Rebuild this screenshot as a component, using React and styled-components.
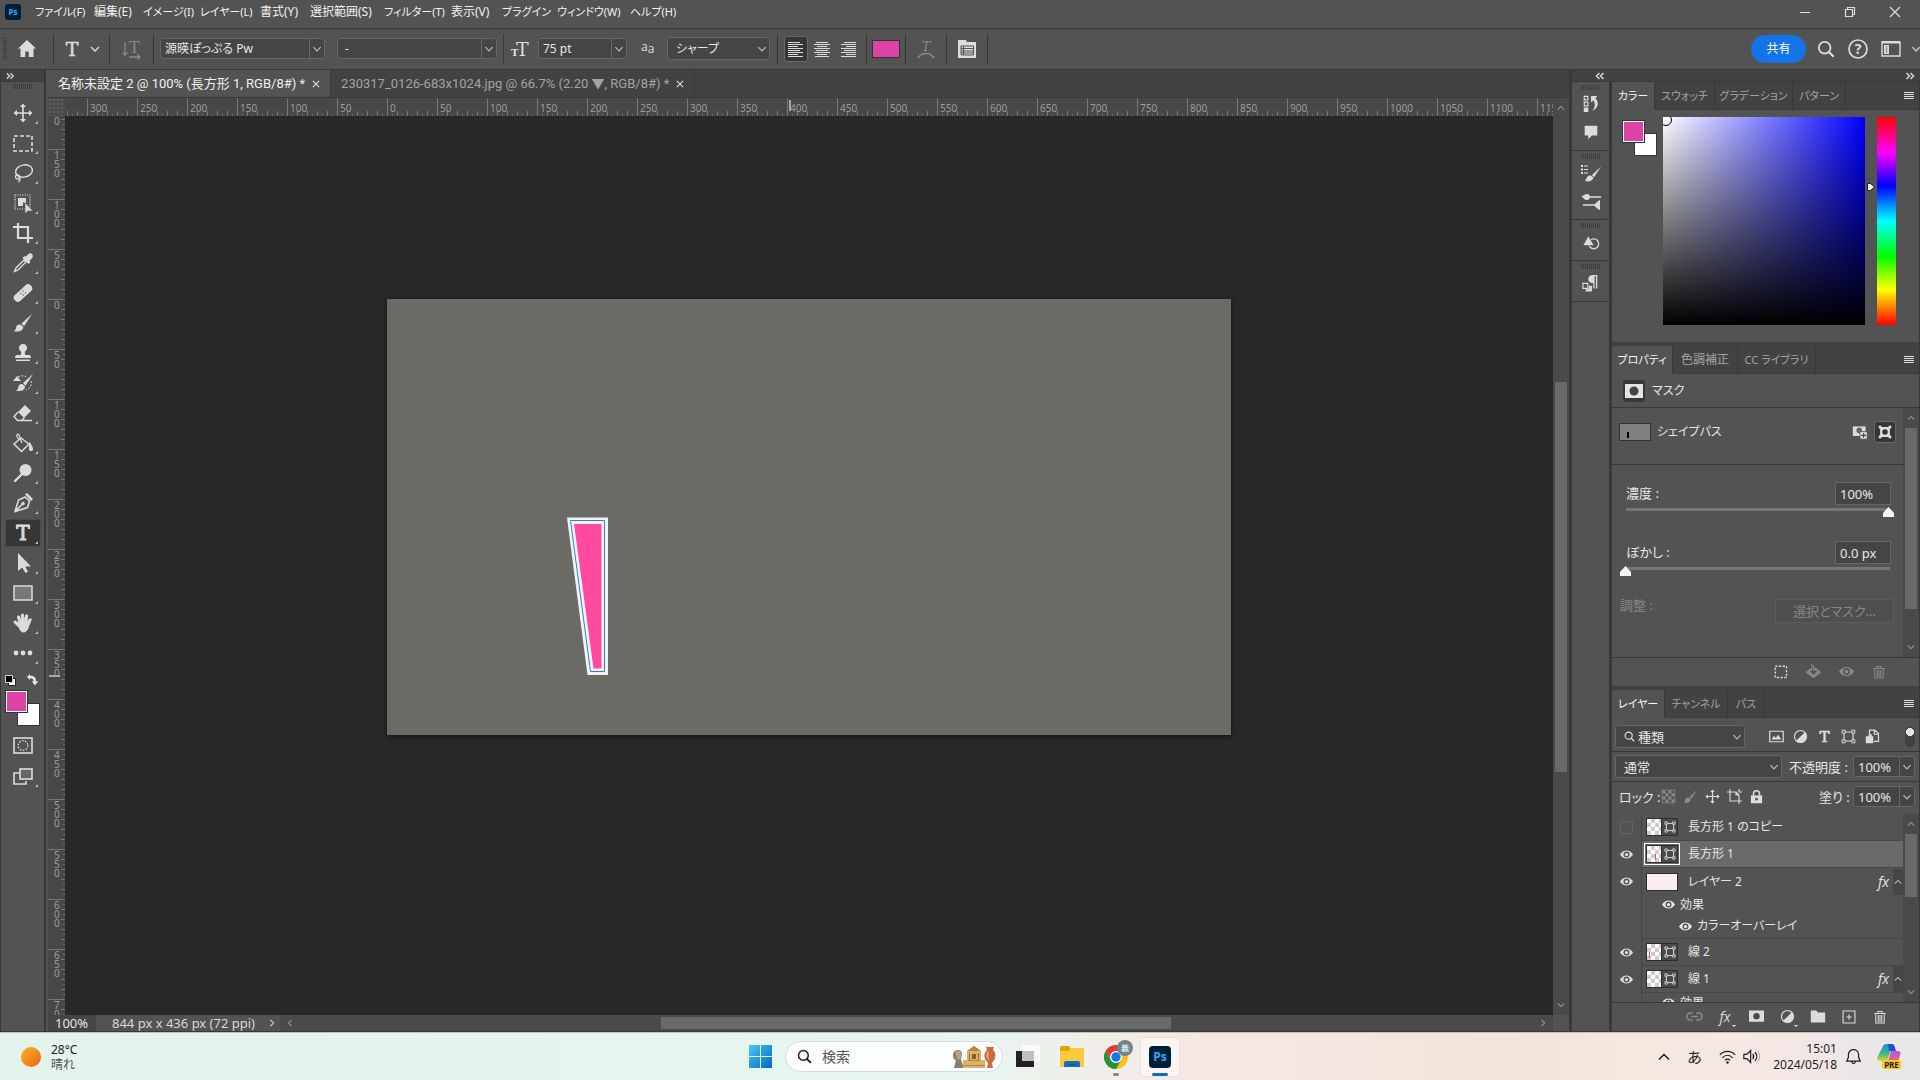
import React, { useState } from "react";
import styled, { createGlobalStyle, css } from "styled-components";

const c = {
  panel: "#535353",
  dark: "#424242",
  track: "#4a4a4a",
  field: "#454545",
  line: "#383838",
  fieldLine: "#666666",
  thumb: "#696969",
  text: "#e6e6e6",
  dim: "#a3a3a3",
  icon: "#dcdcdc",
  pink: "#dc43a5",
};

const GlobalStyle = createGlobalStyle`
  * { box-sizing: border-box; }
  body {
    margin: 0;
    background: ${c.panel};
    color: ${c.text};
    font-family: "Noto Sans", "Noto Sans CJK JP", sans-serif;
    font-size: 12px;
    line-height: 16px;
    font-feature-settings: "palt";
    overflow: hidden;
  }
  button, input, select {
    font: inherit;
    font-feature-settings: inherit;
    color: inherit;
    background: none;
    border: 0;
    padding: 0;
    margin: 0;
    outline: none;
    min-width: 0;
  }
  ul, h1 { margin: 0; padding: 0; list-style: none; font-weight: normal; }
`;

/* ---------- icons ---------- */

const Svg = styled.svg`
  display: block;
  flex: none;
  overflow: visible;
  width: ${(p) => p.$w || 20}px;
  height: ${(p) => p.$h || p.$w || 20}px;
  fill: currentColor;
`;

const line = { fill: "none", stroke: "currentColor" };

const icons = {
  home: <path d="M10 1 1 9.5h2.5V18h4.800v-5.500h3.400V18h4.800V9.500H19z" />,
  chevron: <path {...line} strokeWidth="1.300" d="m6 8 4 4 4-4" />,
  up: <path {...line} strokeWidth="1.300" d="m6 12 4-4 4 4" />,
  left: <path {...line} strokeWidth="1.300" d="m12 6-4 4 4 4" />,
  right: <path {...line} strokeWidth="1.300" d="m8 6 4 4-4 4" />,
  close: <path {...line} strokeWidth="1.200" d="m6.500 6.500 7 7m0-7-7 7" />,
  collapse: <path {...line} strokeWidth="1.600" d="m9.500 7-3 3 3 3m4-6-3 3 3 3" />,
  expand: <path {...line} strokeWidth="1.600" d="m6.500 7 3 3-3 3m4-6 3 3-3 3" />,
  menu: <path {...line} d="M5 6.500h10m-10 2h10m-10 2h10m-10 2h10" />,
  move: (
    <>
      <path {...line} strokeWidth="1.600" d="M10 3v14M3 10h14" />
      <path d="m10 .5 3 3.500H7zM10 19.500l3-3.500H7zM.5 10 4 7v6zM19.500 10 16 7v6z" />
    </>
  ),
  marquee: <rect {...line} strokeWidth="1.600" strokeDasharray="4 2" x="1" y="3" width="18" height="15" />,
  lasso: (
    <>
      <ellipse {...line} strokeWidth="1.500" cx="11" cy="8" rx="8.500" ry="6" transform="rotate(-12 11 8)" />
      <circle {...line} strokeWidth="1.300" cx="4.500" cy="14" r="2" />
      <path {...line} strokeWidth="1.300" d="M3 12c3 1 6 3 2.500 7" />
    </>
  ),
  object: (
    <>
      <rect {...line} strokeWidth="1.200" strokeDasharray="1.200 1.200" x="2" y="2" width="15" height="14" />
      <path d="M5 5h8v6l-3-2v4H5z" />
      <path stroke={c.panel} strokeWidth=".6" d="M12 9.500v11l3-2.500h5z" />
    </>
  ),
  crop: <path {...line} strokeWidth="2.200" d="M0 4h15v12M5 0v15h15M15 14v6" />,
  dropper: (
    <>
      <path {...line} strokeWidth="1.400" d="m11 7 2 2-8 8-3.500 1.500L3 15z" />
      <path d="M19 1c-1.500-1.300-3-.8-4 .5l-2.300 2.300-1.200-.8-2 2 6 6 2-2-1-1.300 2.500-2.500c1-1.400 1.200-3 0-4.200z" />
    </>
  ),
  heal: (
    <>
      <rect x="-1" y="6" width="22" height="8" rx="4" transform="rotate(-42 10 10)" />
      <path stroke={c.panel} strokeWidth="1.300" strokeLinecap="round" d="M10 8v.1M12.500 9.800v.1M7.800 10.300v.1M10.200 12v.1" />
    </>
  ),
  brush: (
    <>
      <path d="M19 1 8.500 10.500l2.500 2.700z" />
      <path d="M7.500 11.500c-3-.6-4.300 1.500-4.500 3.500-.2 1.600-1 2.500-2.300 3 3.800 1.300 9 .8 9.600-4z" />
    </>
  ),
  stamp: <path d="M10 1a4 4 0 0 0-2.300 7.300c.8.800.5 2.700-.2 3.700H4c-1.500 0-2 1-2 3h16c0-2-.5-3-2-3h-3.500c-.7-1-1-2.900-.2-3.700A4 4 0 0 0 10 1zM3 16.500h14V18H3z" />,
  history: (
    <>
      <path d="M20 1 10 10l2.500 2.700z" />
      <path d="M9.500 11c-3-.6-4 1.500-4.300 3.500-.2 1.600-1 2.500-2.300 3 3.800 1.300 8.600.8 9.200-4z" />
      <path d="m0 8 4-5 4 5z" />
      <path {...line} strokeDasharray="2 1.500" d="M5 4c4-2 5-1 8-.5M18 8c1 3 0 7-5 9" />
    </>
  ),
  eraser: (
    <>
      <path d="m12 2 6 6-7 7-6-6z" />
      <path {...line} strokeWidth="1.400" d="m5 9-4 4.500 3.500 4h4l3-3M9 17.500h10" />
    </>
  ),
  bucket: (
    <>
      <path {...line} strokeWidth="1.500" d="m8 5 8 6-7.500 7.500L1 11z" />
      <path {...line} strokeWidth="1.300" d="M9 10 6 2c-1-1.500-3-.5-2 1.500L6 7" />
      <path d="M16 9c2 1 3 4 4 6.500a2 2 0 0 1-4 1c-.3-2 .3-4 0-7.500z" />
    </>
  ),
  dodge: (
    <>
      <circle cx="12.500" cy="7" r="6" />
      <path {...line} strokeWidth="2.400" strokeLinecap="round" d="M9 11 2 18" />
    </>
  ),
  pen: (
    <>
      <path {...line} strokeWidth="1.600" d="m12 4 4.500 4-2 6.500L2 18.500 5.500 7zM2 18.500l7-7" />
      <circle cx="10" cy="10.500" r="1.700" />
      <path d="m12 1.500 2-1.500 6 6-2 2z" />
    </>
  ),
  select: <path d="M5 0v18l4.200-3.600L12.500 20l2.500-1.300-2.700-5.200H18z" />,
  rect: <rect x="1" y="3" width="18" height="14" fill="#777" stroke="currentColor" strokeWidth="1.500" />,
  hand: (
    <path
      {...line}
      fill="currentColor"
      strokeWidth="1"
      strokeLinejoin="round"
      d="M6.500 15 1 9.500c-.8-1.200.8-2 1.800-1.300L6 10.500 4.500 4c-.2-1.500 1.700-1.700 2-.3L8 9l.3-7c.2-1.500 2-1.500 2.200 0L11 9l1.500-6.500c.5-1.400 2.200-1 2 .5L14 9.500 16.500 6c1-1 2.300-.2 1.700 1l-2.700 6.500c-1 4-2.500 5.500-5 5.500s-3-1.500-4-4z"
    />
  ),
  dots: (
    <>
      <circle cx="3" cy="10" r="2.400" />
      <circle cx="10" cy="10" r="2.400" />
      <circle cx="17" cy="10" r="2.400" />
    </>
  ),
  swap: <path d="M5 0 0 5l5 5V7c4 0 6 2 6 5H8l5 7 6-7h-4c0-6-3-9-10-9z" />,
  quickmask: (
    <>
      <rect {...line} strokeWidth="1.600" x="1" y="2" width="18" height="15" />
      <circle {...line} strokeWidth="1.300" strokeDasharray="1.600 1.400" cx="10" cy="9.500" r="4.800" />
    </>
  ),
  screen: (
    <>
      <path {...line} strokeWidth="1.600" d="M7 7H1v11h12v-3" />
      <rect x="7" y="3" width="12" height="10" fill="#666" stroke="currentColor" strokeWidth="1.600" />
    </>
  ),
  orient: (
    <>
      <text x="7" y="14" fontFamily="DejaVu Serif" fontSize="16">T</text>
      <path {...line} strokeWidth="1.300" d="M3 3v13m-2.500-2.500L3 16l2.500-2.500M7 18h11m-2.500-2.500L18 18l-2.500 2.500" />
    </>
  ),
  sizes: (
    <>
      <text x="0" y="17" fontFamily="DejaVu Serif" fontSize="10" fontWeight="bold">T</text>
      <text x="5" y="17" fontFamily="DejaVu Serif" fontSize="19">T</text>
    </>
  ),
  type: <text x="10" y="16.500" textAnchor="middle" fontFamily="DejaVu Serif" fontSize="19" stroke="currentColor" strokeWidth=".5">T</text>,
  typeTool: <text x="10" y="17" textAnchor="middle" fontFamily="DejaVu Serif" fontSize="20" stroke="currentColor" strokeWidth=".9">T</text>,
  alignLeft: <path {...line} d="M2 3.500h12m-12 2h15m-15 2h10m-10 2h15m-15 2h12m-12 2h15m-15 2h10m-10 2h15" />,
  alignCenter: <path {...line} d="M4 3.500h12m-14 2h16m-13 2h10m-13 2h16m-14 2h12m-14 2h16m-13 2h10m-12 2h14" />,
  alignRight: <path {...line} d="M6 3.500h12m-15 2h15m-10 2h10m-15 2h15m-12 2h12m-15 2h15m-10 2h10m-15 2h15" />,
  warp: (
    <>
      <text x="10" y="12" textAnchor="middle" fontFamily="DejaVu Serif" fontSize="13" fontStyle="italic">T</text>
      <path {...line} strokeWidth="1.600" d="M2 19c4-6 12-6 16 0" />
    </>
  ),
  charPanel: (
    <>
      <path d="M1 1h8l1 2h9v16H1z" />
      <path {...line} stroke={c.panel} d="M10 1.500h9M4 7h12.500v9H4zM4 9.500h12.500M4 12h12.500M4 14h12.500M6.500 7v9" />
    </>
  ),
  search: (
    <>
      <circle {...line} strokeWidth="2" cx="8.500" cy="8.500" r="6.500" />
      <path {...line} strokeWidth="2.400" d="m13 13 5.500 5.500" />
    </>
  ),
  help: (
    <>
      <circle {...line} strokeWidth="1.700" cx="10" cy="10" r="9" />
      <text x="10" y="15" textAnchor="middle" fontSize="14" fontWeight="bold">?</text>
    </>
  ),
  workspace: (
    <>
      <path {...line} strokeWidth="1.400" d="M1 3h18v14H1z" />
      <path d="M1 2h18v2.500H1zM3 6h5v9H3z" />
      <path {...line} stroke={c.panel} strokeDasharray="1 1" strokeWidth="1.500" d="M5.500 7.500V14" />
    </>
  ),
  historyPanel: (
    <>
      <path {...line} strokeWidth="1.300" d="M2.500 1.500h4v4h-4zM2.500 8h4v4h-4z" />
      <path d="M2 14h5v5H2zM10 8V1h7l-2 2.500c4.500 5 3 11-3.500 14C15 13 15 9 12.500 6z" />
    </>
  ),
  comment: <path d="M3 3h14v11h-6l-4 4v-4H3z" />,
  brushes: (
    <>
      <path d="M0 2h2v2H0zM0 5.500h2v2H0zM0 9h2v2H0z" />
      <path {...line} d="M3 3h4M3 6.500h4M3 10h4" />
      <path d="M20 3.500 11 12l2 2.200zM10 12.500c-4 0-4 2-6 5.500 4 1.300 7.500 0 8.500-3.500z" />
    </>
  ),
  brushSettings: (
    <>
      <path {...line} strokeWidth="1.600" d="M9 6h11M2 14h11" />
      <path d="M0 5.500c2 0 3-2.500 6-2.500 4 0 4 6 0 6-3 0-3-2.500-6-3.500zM12 14c3-1 4-4 7-5v10c-3-1-5-4-7-5z" />
    </>
  ),
  shapes: (
    <>
      <circle {...line} strokeWidth="1.500" cx="13" cy="12" r="5.500" />
      <path stroke={c.panel} strokeWidth=".8" d="m7 3 6.500 11H1z" />
    </>
  ),
  paragraph: (
    <>
      <path d="M17 1v15h-1.500V2.500H14V16h-1.500v-6C8.500 10 7 8 7 5.500S9 1 12 1z" />
      <path {...line} strokeWidth="1.300" d="M1 10.500h5.500V16H1z" />
      <path d="M4 17h3.500v-4H11v6.500H4z" />
    </>
  ),
  mask: (
    <>
      <path d="M1 3h18v14H1z" />
      <circle cx="10" cy="10" r="4.500" fill="#444" />
    </>
  ),
  addMask: (
    <>
      <path d="M1 3h16v12H1z" />
      <circle cx="9" cy="8" r="3.500" fill="#666" />
      <path stroke={c.panel} d="M10 9.500h9V19h-9z" />
      <path {...line} stroke="#444" strokeWidth="1.400" d="M11.500 14.200h6m-3-3v6" />
    </>
  ),
  vectorMask: (
    <>
      <path d="M3 3h14v14H3zM1 1h4v4H1zM15 1h4v4h-4zM1 15h4v4H1zM15 15h4v4h-4z" />
      <circle cx="10" cy="10" r="4" fill="#383838" />
    </>
  ),
  dashedBox: <rect {...line} strokeWidth="1.700" strokeDasharray="3 2" x="3" y="3" width="15" height="15" />,
  apply: (
    <>
      <path d="m8 5-7 6 9 7 9-7-7-6-.5 3.500 3 .5-4.500 5L5.500 9l3-.5z" />
      <path {...line} strokeWidth="2" d="M7 2.500c3 0 3.500 2 3.500 7" />
    </>
  ),
  eye: (
    <>
      <path d="M0 10c5-8 15-8 20 0-5 8-15 8-20 0z" />
      <circle cx="10" cy="10" r="4.600" fill={c.panel} />
      <circle cx="10" cy="10" r="2.500" />
    </>
  ),
  trash: (
    <>
      <path {...line} strokeWidth="1.500" d="M1.500 5h17M7 4.500V2h6v2.500M4 6v12.500h12V6" />
      <path {...line} strokeWidth="1.500" d="M7.500 7v10M10 7v10M12.500 7v10" />
    </>
  ),
  image: (
    <>
      <path {...line} strokeWidth="1.600" d="M1 3h18v14H1z" />
      <path d="m3.500 14 3-5 2.500 3 3-4.500L16.500 14z" />
    </>
  ),
  adjust: (
    <>
      <circle {...line} strokeWidth="1.500" cx="10" cy="10" r="8" />
      <path d="M15.800 4.200a8 8 0 1 1-11.600 11.600z" />
    </>
  ),
  frame: (
    <>
      <path {...line} strokeWidth="1.500" d="M4 4h12v12H4z" />
      <path fill={c.panel} stroke="currentColor" strokeWidth="1.300" d="M1.500 1.500h4v4h-4zM14.500 1.500h4v4h-4zM1.500 14.500h4v4h-4zM14.500 14.500h4v4h-4z" />
    </>
  ),
  smart: (
    <>
      <path {...line} strokeWidth="1.600" d="M6 9V1.500h7L18 6v10.500h-6M12.500 1.500V7H18" />
      <path d="M1 9.500h4V7h4v2.500h2V19H1z" />
    </>
  ),
  checker: (
    <>
      <path {...line} d="M1.500 1.500h17v17h-17z" />
      <path d="M2 2h4v4H2zM10 2h4v4h-4zM6 6h4v4H6zM14 6h4v4h-4zM2 10h4v4H2zM10 10h4v4h-4zM6 14h4v4H6zM14 14h4v4h-4z" />
    </>
  ),
  artboard: <path {...line} strokeWidth="1.500" d="M4 0v16h16M0 4h12l4 4v12M12 4v4h4M16 0v4h4" />,
  lock: (
    <>
      <path {...line} strokeWidth="2" d="M6 9V6c0-5 8-5 8 0v3" />
      <path d="M2.500 8.500h15V19h-15z" />
      <circle cx="10" cy="13.500" r="1.800" fill={c.panel} />
    </>
  ),
  link: <path {...line} strokeWidth="1.800" d="M8 6H5C0 6 0 14 5 14h3m4-8h3c5 0 5 8 0 8h-3M6 10h8" />,
  maskBtn: (
    <>
      <path d="M0 2h20v15H0z" />
      <circle cx="10" cy="9.500" r="4.300" fill="#4a4a4a" />
    </>
  ),
  folder: <path d="M1 2h7l1.500 2.500H19V17H1z" />,
  plus: <path {...line} strokeWidth="1.600" d="M1.500 1.500h17v17h-17zM10 6v8m-4-4h8" />,
  minimize: <path {...line} d="M5 10.500h10" />,
  restore: <path {...line} strokeWidth="1.200" d="M5.500 7.500h7v7h-7zM7.500 7V5.500h7v7H13" />,
  x: <path {...line} strokeWidth="1.200" d="m5 5 10 10m0-10L5 15" />,
};

const Icon = ({ name, w, h }) => (
  <Svg viewBox="0 0 20 20" $w={w} $h={h} aria-hidden="true">
    {icons[name]}
  </Svg>
);

const IconButton = styled.button`
  position: relative;
  display: flex;
  align-items: center;
  justify-content: center;
  flex: none;
  width: ${(p) => p.$w || 24}px;
  height: ${(p) => p.$h || p.$w || 24}px;
  color: ${(p) => (p.$dim ? "#8a8a8a" : c.icon)};
  border-radius: 3px;
  ${(p) =>
    p.$on &&
    css`
      background: #363636;
      border: 1px solid #6a6a6a;
    `}
  ${(p) =>
    p.$menu &&
    css`
      &::after {
        content: "";
        position: absolute;
        right: 0;
        bottom: 1px;
        border: 2px solid transparent;
        border-top-color: #e6e6e6;
        border-bottom: 0;
      }
    `}
`;

const Spacer = styled.div`
  flex: 1;
`;

/* ---------- frame ---------- */

const Shell = styled.div`
  display: flex;
  flex-direction: column;
  height: 100vh;
`;

const MenuBar = styled.nav`
  display: flex;
  align-items: center;
  height: 29px;
  flex: none;
  padding: 0 15px 5px 5px;
  border-bottom: 1px solid ${c.line};
`;

const PsMark = styled.span`
  display: flex;
  align-items: center;
  justify-content: center;
  width: ${(p) => p.$size}px;
  height: ${(p) => p.$size}px;
  margin-right: ${(p) => (p.$size > 20 ? 0 : 14)}px;
  border-radius: ${(p) => (p.$size > 20 ? 4 : 3)}px;
  background: #001e36;
  color: #31a8ff;
  font-family: "Open Sans", sans-serif;
  font-weight: bold;
  font-size: ${(p) => (p.$size > 20 ? 12 : 8)}px;
`;

const MenuItem = styled.button`
  width: ${(p) => p.$w}px;
  text-align: left;
  white-space: nowrap;
  font-size: ${(p) => (p.$kana ? 11 : 12)}px;
  color: #f2f2f2;
`;

const WindowButtons = styled.div`
  display: flex;
  gap: 25px;
`;

const OptionsBar = styled.div`
  display: flex;
  align-items: center;
  height: 41px;
  flex: none;
  padding-bottom: 1px;
  border-bottom: 1px solid ${c.line};
  padding-left: 3px;
`;

const Section = styled.div`
  display: flex;
  align-items: center;
  justify-content: ${(p) => (p.$pad === undefined ? "center" : "flex-start")};
  width: ${(p) => (p.$w ? p.$w + "px" : "auto")};
  height: 30px;
  gap: ${(p) => p.$gap || 0}px;
  padding: 0 ${(p) => p.$pad || 0}px;
  border-right: 1px solid ${c.line};
  color: ${(p) => (p.$dim ? "#8a8a8a" : c.icon)};
`;

const Grip = styled.span`
  flex: none;
  width: ${(p) => (p.$tall ? 4 : 20)}px;
  height: ${(p) => (p.$tall ? 22 : 5)}px;
  background: ${(p) =>
    p.$tall
      ? "repeating-linear-gradient(#3e3e3e 0 1px, transparent 1px 2px)"
      : "repeating-linear-gradient(90deg, #3e3e3e 0 1px, transparent 1px 2px)"};
`;

const ComboBox = styled.span`
  display: flex;
  flex: none;
  width: ${(p) => p.$w}px;
  height: 21px;
  background: ${c.field};
  border: 1px solid ${c.fieldLine};
  border-radius: 3px;
  color: ${c.text};
  input {
    flex: 1;
    padding-left: 4px;
  }
  button {
    display: flex;
    align-items: center;
    justify-content: center;
    width: 15px;
    border-left: 1px solid ${c.fieldLine};
    color: #bdbdbd;
  }
`;

const Combo = ({ w, label, value }) => (
  <ComboBox $w={w}>
    <input aria-label={label} defaultValue={value} />
    <button aria-label={label + "一覧"}>
      <Icon name="chevron" w={18} />
    </button>
  </ComboBox>
);

const SelectBox = styled.span`
  position: relative;
  display: flex;
  flex: none;
  align-items: center;
  width: ${(p) => p.$w}px;
  height: 23px;
  background: ${c.field};
  border: 1px solid ${c.fieldLine};
  border-radius: 3px;
  color: ${c.text};
  select {
    appearance: none;
    width: 100%;
    height: 100%;
    padding-left: ${(p) => p.$pad || 8}px;
  }
  svg.arrow {
    position: absolute;
    right: -2px;
    color: #bdbdbd;
    pointer-events: none;
  }
  svg.lead {
    position: absolute;
    left: 8px;
    pointer-events: none;
  }
`;

const Select = ({ w, pad, label, value, lead }) => (
  <SelectBox $w={w} $pad={pad}>
    {lead && (
      <Svg className="lead" $w={11} viewBox="0 0 20 20">
        {icons.search}
      </Svg>
    )}
    <select aria-label={label}>
      <option>{value}</option>
    </select>
    <Svg className="arrow" $w={18} viewBox="0 0 20 20">
      {icons.chevron}
    </Svg>
  </SelectBox>
);

const ColorButton = styled.button`
  width: 28px;
  height: 18px;
  background: ${c.pink};
  border: 1px solid #333;
`;

const AntiAlias = styled.span`
  width: 40px;
  padding-left: 14px;
  font-family: "Open Sans", sans-serif;
  font-size: 12px;
  sup {
    vertical-align: 2px;
    font-size: 12px;
    line-height: 0;
  }
`;

const Share = styled.button`
  width: 55px;
  height: 28px;
  border-radius: 14px;
  background: #1473e6;
  color: #fff;
`;

const OptionsEnd = styled.div`
  display: flex;
  align-items: center;
  gap: 8px;
`;

const Main = styled.div`
  display: flex;
  flex: 1;
  min-height: 0;
  border-bottom: 1px solid ${c.line};
`;

/* ---------- tool column ---------- */

const ToolColumn = styled.aside`
  display: flex;
  flex-direction: column;
  align-items: center;
  flex: none;
  width: 46px;
  border-right: 2px solid ${c.line};
  border-left: 1px solid ${c.line};
`;

const PanelTop = styled.div`
  display: flex;
  align-items: center;
  align-self: stretch;
  flex: none;
  height: 12px;
  background: ${c.dark};
  border-bottom: 1px solid ${c.line};
  overflow: hidden;
  justify-content: space-between;
  padding-left: ${(p) => p.$padL || 0}px;
  color: #d0d0d0;
`;

const Tools = styled.div`
  display: flex;
  flex-direction: column;
  align-items: center;
  padding-top: 2px;
  > span {
    margin-bottom: 8px;
  }
`;

const ToolButton = styled.button`
  position: relative;
  display: flex;
  align-items: center;
  justify-content: center;
  width: 36px;
  height: 28px;
  margin-top: 2px;
  color: ${c.icon};
  border-radius: 3px;
  ${(p) =>
    p.$on &&
    css`
      background: #363636;
      box-shadow: inset 0 0 0 1px #4b4b4b;
    `}
  &::after {
    content: ${(p) => (p.$plain ? "none" : '""')};
    position: absolute;
    right: 3px;
    bottom: 3px;
    border-left: 3px solid transparent;
    border-bottom: 3px solid #bdbdbd;
  }
`;

const MiniRow = styled.div`
  display: flex;
  align-items: center;
  justify-content: space-between;
  width: 36px;
  height: 20px;
  margin-top: 3px;
  padding-right: 2px;
`;

const Swatches = styled.div`
  position: relative;
  flex: none;
  width: 35px;
  height: 36px;
`;

const Swatch = styled.button`
  position: absolute;
  ${(p) => (p.$back ? "right: 0; bottom: 0;" : "left: 0; top: 0;")}
  width: 23px;
  height: 23px;
  background: ${(p) => p.$color};
  border: 1px solid #333;
  box-shadow: ${(p) => (p.$back ? "none" : "inset 0 0 0 1px #fff")};
`;

const MaskTools = styled.div`
  padding-top: 4px;
`;

const tools = [
  ["move", "移動ツール"],
  ["marquee", "長方形選択ツール"],
  ["lasso", "なげなわツール"],
  ["object", "オブジェクト選択ツール"],
  ["crop", "切り抜きツール"],
  ["dropper", "スポイトツール"],
  ["heal", "スポット修復ブラシツール"],
  ["brush", "ブラシツール"],
  ["stamp", "コピースタンプツール"],
  ["history", "ヒストリーブラシツール"],
  ["eraser", "消しゴムツール"],
  ["bucket", "塗りつぶしツール"],
  ["dodge", "覆い焼きツール"],
  ["pen", "ペンツール"],
  ["typeTool", "横書き文字ツール"],
  ["select", "パス選択ツール"],
  ["rect", "長方形ツール"],
  ["hand", "手のひらツール"],
  ["dots", "ツールバーを編集"],
];

function ToolBar() {
  const [active, setActive] = useState("typeTool");
  return (
    <ToolColumn>
      <PanelTop>
        <Icon name="expand" w={18} />
      </PanelTop>
      <Tools>
        <Grip />
        {tools.map(([name, label]) => (
          <ToolButton key={name} aria-label={label} $on={active === name} onClick={() => setActive(name)}>
            <Icon name={name} w={20} />
          </ToolButton>
        ))}
      </Tools>
      <MiniRow>
        <Svg $w={11} viewBox="0 0 11 11">
          <path fill="#fff" stroke="#222" d="M3.500 3.500h7v7h-7z" />
          <path fill="#000" stroke="#ccc" d="M.5.5h7v7h-7z" />
        </Svg>
        <Icon name="swap" w={12} />
      </MiniRow>
      <Swatches>
        <Swatch $back $color="#fff" aria-label="背景色" />
        <Swatch $color={c.pink} aria-label="描画色" />
      </Swatches>
      <MaskTools>
        <ToolButton $plain aria-label="クイックマスク">
          <Icon name="quickmask" w={20} />
        </ToolButton>
        <ToolButton aria-label="スクリーンモード">
          <Icon name="screen" w={20} />
        </ToolButton>
      </MaskTools>
    </ToolColumn>
  );
}

/* ---------- document ---------- */

const DocColumn = styled.main`
  display: flex;
  flex-direction: column;
  flex: 1;
  min-width: 0;
  margin-left: 2px;
`;

const DocTabs = styled.div`
  display: flex;
  flex: none;
  height: 28px;
  background: ${c.dark};
  border-bottom: 1px solid ${c.line};
`;

const DocTab = styled.div`
  display: flex;
  align-items: center;
  gap: 2px;
  padding: 0 5px 0 10px;
  font-family: Roboto, "Noto Sans CJK JP", sans-serif;
  font-size: 13px;
  white-space: nowrap;
  border-right: 1px solid ${c.line};
  background: ${(p) => (p.$on ? c.panel : "transparent")};
  color: ${(p) => (p.$on ? "#f0f0f0" : c.dim)};
`;

const DocGrid = styled.div`
  display: grid;
  flex: 1;
  min-height: 0;
  grid-template-columns: 17px 1fr 16px;
  grid-template-rows: 18px 1fr 16px;
`;

const Corner = styled.div`
  background: #484848;
  background-image: radial-gradient(#666 1px, transparent 1px);
  background-size: 4px 4px;
  opacity: 0.6;
`;

const rulerBase = css`
  position: relative;
  display: flex;
  overflow: hidden;
  background-color: #474747;
  color: #9c9c9c;
  font-size: 10px;
`;

const RulerH = styled.div`
  ${rulerBase}
  background-image: repeating-linear-gradient(90deg, #777 0 1px, transparent 1px 10px),
    repeating-linear-gradient(90deg, #6c6c6c 0 1px, transparent 1px 5px);
  background-size: 10000px 5px, 10000px 2px;
  background-position: 2px bottom, 2px bottom;
  background-repeat: no-repeat;
  span {
    flex: none;
    width: 50px;
    padding-left: 2px;
    line-height: 21px;
    border-left: 1px solid #777;
  }
  span:first-child {
    width: 22px;
    border-left: 0;
  }
`;

const RulerV = styled.div`
  ${rulerBase}
  flex-direction: column;
  background-image: repeating-linear-gradient(#777 0 1px, transparent 1px 10px),
    repeating-linear-gradient(#6c6c6c 0 1px, transparent 1px 5px);
  background-size: 4px 10000px, 2px 10000px;
  background-position: right 3px, right 3px;
  background-repeat: no-repeat;
  span {
    flex: none;
    height: 50px;
    padding: 1px 4px 0 6px;
    line-height: 9px;
    word-break: break-all;
    border-top: 1px solid #777;
  }
  span:first-child {
    height: 33px;
    border-top: 0;
  }
`;

const CursorMark = styled.i`
  position: absolute;
  background: #a8a8a8;
  ${(p) => (p.$v ? "left: 1px; top: 559px; width: 11px; height: 2px;" : "left: 724px; top: 2px; width: 2px; height: 11px;")}
`;

const Stage = styled.div`
  display: flex;
  justify-content: center;
  align-items: flex-start;
  padding-top: 183px;
  background: #282828;
  overflow: hidden;
`;

const Artboard = styled.div`
  flex: none;
  width: 844px;
  height: 436px;
  background: #6a6b65;
  box-shadow: 0 1px 4px #111;
`;

const ScrollTrack = styled.div`
  display: flex;
  flex-direction: ${(p) => (p.$h ? "row" : "column")};
  align-items: center;
  background: ${c.track};
  color: #999;
  ${(p) => p.$h && "flex: 1;"}
  ${(p) => p.$w && `width: ${p.$w}px; flex: none;`}
  ${(p) => p.$span && "grid-column: 3; grid-row: 1 / 3;"}
`;

const ScrollThumb = styled.i`
  flex: ${(p) => p.$size} 0 0;
  align-self: stretch;
  margin: ${(p) => (p.$h ? "2px 0" : "0 2px")};
  background: ${c.thumb};
`;

const Gap = styled.i`
  flex: ${(p) => p.$size} 0 0;
`;

const Scroll = ({ h, before, size, after, w, span }) => (
  <ScrollTrack $h={h} $w={w} $span={span}>
    <Icon name={h ? "left" : "up"} w={h ? 20 : 16} h={h ? 16 : 20} />
    <Gap $size={before} />
    <ScrollThumb $h={h} $size={size} />
    <Gap $size={after} />
    <Icon name={h ? "right" : "chevron"} w={h ? 20 : 16} h={h ? 16 : 20} />
  </ScrollTrack>
);

const StatusBar = styled.div`
  grid-column: 1 / 3;
  display: flex;
  background: ${c.track};
  font-size: 13px;
  line-height: 16px;
`;

const Zoom = styled.span`
  width: 48px;
  padding-left: 7px;
  background: ${c.field};
`;

const DocInfo = styled.span`
  display: flex;
  justify-content: space-between;
  width: 184px;
  padding-left: 16px;
  background: ${c.panel};
  color: #d8d8d8;
`;

const range = (from, to) => Array.from({ length: (to - from) / 50 + 1 }, (_, i) => Math.abs(from + i * 50));

const Document = () => (
  <DocColumn>
    <DocTabs>
      <DocTab $on>
        名称未設定 2 @ 100% (長方形 1, RGB/8#) *
        <IconButton $w={18} aria-label="閉じる">
          <Icon name="close" w={18} />
        </IconButton>
      </DocTab>
      <DocTab>
        230317_0126-683x1024.jpg @ 66.7% (2.20 ▼, RGB/8#) *
        <IconButton $w={18} aria-label="閉じる">
          <Icon name="close" w={18} />
        </IconButton>
      </DocTab>
    </DocTabs>
    <DocGrid>
      <Corner />
      <RulerH>
        <span />
        {range(-300, 1150).map((n, i) => (
          <span key={i}>{n}</span>
        ))}
        <CursorMark />
      </RulerH>
      <Scroll span before={265} size={390} after={224} />
      <RulerV>
        <span>0</span>
        {range(-150, 700).map((n, i) => (
          <span key={i}>{n}</span>
        ))}
        <CursorMark $v />
      </RulerV>
      <Stage>
        <Artboard>
          <svg width="844" height="436" aria-label="長方形 1">
            <path fill="#f4f4f8" d="M180 218.500h41V376h-20.500z" />
            <path fill="#ff4a9f" d="M187 225h27.500v144.500h-8z" />
            <path fill="none" stroke="#2f7fd0" d="M183.500 221.500h34v151h-14z" />
          </svg>
        </Artboard>
      </Stage>
      <StatusBar>
        <Zoom>100%</Zoom>
        <DocInfo>
          844 px x 436 px (72 ppi)
          <Icon name="right" w={16} />
        </DocInfo>
        <Scroll h before={361} size={510} after={362} />
      </StatusBar>
    </DocGrid>
  </DocColumn>
);

/* ---------- right side ---------- */

const RightSide = styled.div`
  display: flex;
  flex-direction: column;
  flex: none;
  width: 351px;
  border-left: 3px solid ${c.line};
`;

const RightCols = styled.div`
  display: flex;
  flex: 1;
  min-height: 0;
`;

const IconStrip = styled.div`
  width: 40px;
  flex: none;
  border-right: 3px solid ${c.line};
`;

const StripGroup = styled.div`
  display: flex;
  flex-direction: column;
  align-items: center;
  padding: 3px 0 4px;
  border-bottom: 1px solid ${c.line};
  button {
    height: 28px;
  }
`;

const Panels = styled.div`
  display: flex;
  flex-direction: column;
  flex: 1;
  min-width: 0;
  border-right: 1px solid ${c.line};
`;

const Panel = styled.section`
  display: flex;
  flex-direction: column;
  min-height: 0;
  ${(p) => (p.$h ? `flex: none; height: ${p.$h}px;` : "flex: 1;")}
  border-bottom: ${(p) => (p.$h ? 4 : 0)}px solid #404040;
`;

const TabRow = styled.div`
  display: flex;
  flex: none;
  height: 28px;
  background: ${c.dark};
`;

const Tab = styled.button`
  width: ${(p) => p.$w}px;
  white-space: nowrap;
  font-size: ${(p) => (p.$kana ? 11 : 12)}px;
  border-right: 1px solid ${c.line};
  border-bottom: 1px solid ${(p) => (p.$on ? c.panel : c.line)};
  background: ${(p) => (p.$on ? c.panel : "transparent")};
  color: ${(p) => (p.$on ? "#f4f4f4" : c.dim)};
`;

const TabFill = styled.div`
  display: flex;
  flex: 1;
  align-items: center;
  justify-content: flex-end;
  border-bottom: 1px solid ${c.line};
  color: #c8c8c8;
`;

const Tabs = ({ items }) => (
  <TabRow role="tablist">
    {items.map(([label, w], i) => (
      <Tab key={label} role="tab" $w={w} $on={i === 0} $kana={label !== "色調補正"}>
        {label}
      </Tab>
    ))}
    <TabFill>
      <IconButton $w={20} aria-label="パネルメニュー">
        <Icon name="menu" w={20} />
      </IconButton>
    </TabFill>
  </TabRow>
);

const ColorBody = styled.div`
  display: flex;
  padding: 7px 23px 12px 10px;
  flex: 1;
  > div:first-child {
    margin: 3px 6px 0 0;
  }
`;

const Spectrum = styled.div`
  flex: 1;
  height: 208px;
  background: linear-gradient(transparent, #000), linear-gradient(90deg, #fff, #00f);
  svg {
    display: block;
  }
`;

const Hue = styled.div`
  width: 19px;
  height: 208px;
  background: linear-gradient(#f00, #f0f 17%, #00f 33%, #0ff 50%, #0f0 67%, #ff0 83%, #f00);
`;

const HueHandle = styled.div`
  width: 12px;
  padding: 63px 0 0 2px;
`;

const PropHead = styled.div`
  display: flex;
  align-items: center;
  gap: 7px;
  flex: none;
  height: 34px;
  padding-left: 11px;
  border-bottom: 1px solid ${c.line};
`;

const Badge = styled.span`
  display: flex;
  align-items: center;
  justify-content: center;
  width: 22px;
  height: 22px;
  background: #383838;
  border-radius: 3px;
  color: #e4e4e4;
`;

const ScrollPane = styled.div`
  display: flex;
  flex: 1;
  min-height: 0;
`;

const PropBody = styled.div`
  flex: 1;
  min-width: 0;
  overflow: hidden;
  font-size: 13px;
`;

const ShapeRow = styled.div`
  display: flex;
  align-items: center;
  height: 57px;
  padding: 0 7px 9px;
  border-bottom: 1px solid ${c.line};
  gap: 6px;
  font-size: 12px;
`;

const ShapeThumb = styled.span`
  width: 32px;
  height: 18px;
  background: linear-gradient(#000, #000) 7px 8px / 2px 6px no-repeat #808080;
  border: 1px solid #333;
`;

const SliderField = styled.div`
  display: grid;
  grid-template-columns: 1fr 56px;
  align-content: start;
  padding: 17px 12px 0 14px;
  height: 59px;
  label {
    padding-top: 3px;
  }
  input[type="text"] {
    height: 23px;
    padding-left: 4px;
    background: ${c.field};
    border: 1px solid ${c.fieldLine};
  }
  input[type="range"] {
    grid-column: 1 / 3;
    appearance: none;
    height: 12px;
    margin: 1px -3px 0 -6px;
    background: linear-gradient(#777, #777) 6px 2px / calc(100% - 10px) 3px no-repeat;
  }
  input[type="range"]::-webkit-slider-thumb {
    appearance: none;
    width: 11px;
    height: 10px;
    background: #f4f4f4;
    clip-path: polygon(50% 0, 100% 60%, 100% 100%, 0 100%, 0 60%);
  }
`;

const AdjustRow = styled.div`
  display: flex;
  align-items: flex-start;
  justify-content: space-between;
  padding: 14px 9px 0 8px;
  color: #858585;
  button {
    width: 119px;
    height: 24px;
    margin-top: 2px;
    border: 1px solid #5c5c5c;
    background: #4f4f4f;
    color: #868686;
  }
`;

const PanelFoot = styled.div`
  display: flex;
  align-items: center;
  justify-content: flex-end;
  flex: none;
  height: 29px;
  gap: ${(p) => p.$gap}px;
  padding: 0 ${(p) => p.$right}px 1px 0;
  border-top: 1px solid ${c.line};
  button {
    width: 22px;
    height: 22px;
  }
`;

const FilterRow = styled.div`
  display: flex;
  align-items: center;
  flex: none;
  height: ${(p) => p.$h}px;
  padding: ${(p) => p.$top || 0}px 4px ${(p) => (p.$last ? 3 : 0)}px ${(p) => p.$pad || 3}px;
  border-bottom: ${(p) => (p.$last ? 0 : 1)}px solid ${c.line};
  font-size: 13px;
  white-space: nowrap;
`;

const FilterIcons = styled.div`
  display: flex;
  flex: 1;
  gap: 8px;
  padding-left: 23px;
`;

const Toggle = styled.input.attrs({ type: "checkbox" })`
  appearance: none;
  width: 10px;
  height: 20px;
  border-radius: 5px;
  background: radial-gradient(circle at 5px 5px, #e6e6e6 0 4px, transparent 4px 5px), #404040;
`;

const LayerList = styled.ul`
  flex: 1;
  min-width: 0;
  overflow: hidden;
`;

const Layer = styled.li`
  display: flex;
  height: ${(p) => p.$h || 27}px;
  > button {
    width: 30px;
    height: auto;
    border-right: 1px solid #444;
    border-radius: 0;
  }
`;

const LayerBody = styled.div`
  display: flex;
  flex: 1;
  align-items: center;
  gap: ${(p) => (p.$indent ? 5 : 10)}px;
  padding: 0 0 ${(p) => (p.$indent ? 3 : 0)}px ${(p) => p.$indent || 4}px;
  background: ${(p) => (p.$on ? "#6a6a6a" : "transparent")};
  border-bottom: ${(p) => (p.$noLine ? 0 : 1)}px solid #484848;
  white-space: nowrap;
`;

const Thumb = styled.span`
  display: flex;
  justify-content: flex-end;
  width: 32px;
  height: 18px;
  border: 1px solid #2e2e2e;
  background: ${(p) =>
    p.$solid ? "#f8eef1" : "conic-gradient(#ccc 25%, #fff 0 50%, #ccc 0 75%, #fff 0) 0 0 / 8px 8px"};
  outline: ${(p) => (p.$on ? "1px solid #fff" : "none")};
  outline-offset: 1px;
  i {
    width: 1px;
    height: 6px;
    margin: 8px ${(p) => p.$mark}px 0 0;
    background: ${c.pink};
  }
  b {
    display: flex;
    align-items: center;
    justify-content: center;
    width: 16px;
    background: #4a4a4a;
    border-left: 1px solid #2e2e2e;
  }
`;

const EmptyEye = styled.span`
  width: 13px;
  height: 13px;
  border: 1px solid #626262;
`;

const Fx = styled.em`
  font-family: "Open Sans", sans-serif;
  font-size: 14px;
`;

const FxToggle = styled.button`
  display: flex;
  align-items: center;
  justify-content: center;
  width: 10px;
  height: 26px;
  margin-left: -6px;
  background: #464646;
  color: #bbb;
`;

const LayerRow = ({ name, hidden, on, solid, fx, mark }) => (
  <Layer>
    <IconButton aria-label={name + "の表示"}>{hidden ? <EmptyEye /> : <Icon name="eye" w={13} />}</IconButton>
    <LayerBody $on={on} $noLine={solid}>
      <Thumb $on={on} $solid={solid} $mark={mark}>
        {mark && <i />}
        {!solid && (
          <b>
            <Icon name="frame" w={12} />
          </b>
        )}
      </Thumb>
      {name}
      {fx && (
        <>
          <Spacer />
          <Fx>fx</Fx>
          <FxToggle aria-label="効果を折りたたむ">
            <Icon name="up" w={16} />
          </FxToggle>
        </>
      )}
    </LayerBody>
  </Layer>
);

const EffectRow = ({ name, indent, last }) => (
  <Layer $h={22}>
    <IconButton aria-label={name} />
    <LayerBody $indent={indent} $noLine={!last}>
      <Icon name="eye" w={13} />
      {name}
    </LayerBody>
  </Layer>
);

const Lead = styled.span`
  width: ${(p) => p.$w}px;
  flex: none;
`;

const RightDock = () => (
  <RightSide>
    <PanelTop $padL={18}>
      <Icon name="collapse" w={20} />
      <Icon name="expand" w={20} />
    </PanelTop>
    <RightCols>
      <IconStrip>
        {[["historyPanel", "comment"], ["brushes", "brushSettings"], ["shapes"], ["paragraph"]].map((g) => (
          <StripGroup key={g[0]}>
            <Grip />
            {g.map((n) => (
              <IconButton key={n} aria-label={n}>
                <Icon name={n} w={n.startsWith("brush") ? 20 : 18} />
              </IconButton>
            ))}
          </StripGroup>
        ))}
      </IconStrip>
      <Panels>
        <Panel $h={264}>
          <Tabs items={[["カラー", 43], ["スウォッチ", 60], ["グラデーション", 78], ["パターン", 53]]} />
          <ColorBody>
            <Swatches>
              <Swatch $back $color="#fff" aria-label="背景色" />
              <Swatch $color={c.pink} aria-label="描画色" />
            </Swatches>
            <Spectrum>
              <svg width="12" height="12">
                <circle cx="3" cy="3" r="5.500" fill="none" stroke="#000" />
              </svg>
            </Spectrum>
            <HueHandle>
              <svg width="9" height="10">
                <path fill="#eee" stroke="#222" d="M.5 1.500h3l4 3.500-4 3.500h-3z" />
              </svg>
            </HueHandle>
            <Hue />
          </ColorBody>
        </Panel>
        <Panel $h={344}>
          <Tabs items={[["プロパティ", 61], ["色調補正", 65], ["CC ライブラリ", 78]]} />
          <PropHead>
            <Badge>
              <Icon name="mask" w={20} />
            </Badge>
            マスク
          </PropHead>
          <ScrollPane>
            <PropBody>
              <ShapeRow>
                <ShapeThumb />
                シェイプパス
                <Spacer />
                <IconButton $w={16} aria-label="ピクセルマスクを追加">
                  <Icon name="addMask" w={16} />
                </IconButton>
                <IconButton $w={22} $on aria-label="ベクトルマスクを選択">
                  <Icon name="vectorMask" w={14} />
                </IconButton>
              </ShapeRow>
              <SliderField>
                <label htmlFor="density">濃度 :</label>
                <input id="density" type="text" defaultValue="100%" />
                <input type="range" aria-label="濃度" defaultValue="100" />
              </SliderField>
              <SliderField>
                <label htmlFor="feather">ぼかし :</label>
                <input id="feather" type="text" defaultValue="0.0 px" />
                <input type="range" aria-label="ぼかし" defaultValue="0" />
              </SliderField>
              <AdjustRow>
                <span>調整 :</span>
                <button disabled>選択とマスク...</button>
              </AdjustRow>
            </PropBody>
            <Scroll w={16} before={0} size={184} after={28} />
          </ScrollPane>
          <PanelFoot $gap={11} $right={29}>
            <IconButton aria-label="選択範囲を読み込む">
              <Icon name="dashedBox" w={15} />
            </IconButton>
            <IconButton $dim aria-label="マスクを適用">
              <Icon name="apply" w={17} />
            </IconButton>
            <IconButton $dim aria-label="マスクの表示">
              <Icon name="eye" w={15} />
            </IconButton>
            <IconButton $dim aria-label="マスクを削除">
              <Icon name="trash" w={14} />
            </IconButton>
          </PanelFoot>
        </Panel>
        <Panel>
          <Tabs items={[["レイヤー", 53], ["チャンネル", 63], ["パス", 37]]} />
          <FilterRow $h={34} $top={4}>
            <Select w={130} pad={22} label="フィルターの種類" value="種類" lead />
            <FilterIcons>
              {["image", "adjust", "typeTool", "frame", "smart"].map((n) => (
                <IconButton key={n} $w={16} aria-label={n}>
                  <Icon name={n} w={15} />
                </IconButton>
              ))}
            </FilterIcons>
            <Toggle aria-label="フィルターのオン/オフ" />
          </FilterRow>
          <FilterRow $h={30}>
            <Select w={167} label="描画モード" value="通常" />
            <Spacer />
            <Lead $w={64}>不透明度 :</Lead>
            <Combo w={62} label="不透明度" value="100%" />
          </FilterRow>
          <FilterRow $h={32} $pad={7} $last>
            <Lead $w={38}>ロック :</Lead>
            {["checker", "brush", "move", "artboard", "lock"].map((n, i) => (
              <IconButton key={n} $w={22} $dim={i < 2} aria-label={n}>
                <Icon name={n} w={15} />
              </IconButton>
            ))}
            <Spacer />
            <Lead $w={34}>塗り :</Lead>
            <Combo w={62} label="塗り" value="100%" />
          </FilterRow>
          <ScrollPane>
            <LayerList>
              <LayerRow name="長方形 1 のコピー" hidden />
              <LayerRow name="長方形 1" on mark={5} />
              <LayerRow name="レイヤー 2" solid fx />
              <EffectRow name="効果" indent={20} />
              <EffectRow name="カラーオーバーレイ" indent={37} last />
              <LayerRow name="線 2" mark={11} />
              <LayerRow name="線 1" fx />
              <EffectRow name="効果" indent={20} />
            </LayerList>
            <Scroll w={16} before={0} size={62} after={84} />
          </ScrollPane>
          <PanelFoot $gap={9} $right={28}>
            <IconButton $dim aria-label="レイヤーをリンク">
              <Icon name="link" w={17} />
            </IconButton>
            <IconButton $menu aria-label="レイヤースタイル">
              <Fx>fx</Fx>
            </IconButton>
            <IconButton aria-label="マスクを追加">
              <Icon name="maskBtn" w={15} />
            </IconButton>
            <IconButton $menu aria-label="調整レイヤー">
              <Icon name="adjust" w={15} />
            </IconButton>
            <IconButton aria-label="新規グループ">
              <Icon name="folder" w={16} />
            </IconButton>
            <IconButton aria-label="新規レイヤー">
              <Icon name="plus" w={14} />
            </IconButton>
            <IconButton aria-label="レイヤーを削除">
              <Icon name="trash" w={14} />
            </IconButton>
          </PanelFoot>
        </Panel>
      </Panels>
    </RightCols>
  </RightSide>
);

/* ---------- taskbar ---------- */

const TaskBar = styled.footer`
  display: grid;
  grid-template-columns: 1fr auto 1fr;
  align-items: center;
  flex: none;
  height: 48px;
  border-top: 1px solid #b9c3bf;
  background: linear-gradient(90deg, #e3f2eb, #e8f6f0 50%, #f7e7e3 63%, #f2e4dd 78%, #f8e8e3 90%, #e6e7e9);
  color: #1c1c1c;
`;

const Weather = styled.div`
  display: flex;
  align-items: center;
  gap: 10px;
  padding-left: 21px;
  line-height: 15px;
  div span {
    display: block;
    color: #555;
  }
`;

const Sun = styled.i`
  width: 20px;
  height: 20px;
  border-radius: 50%;
  background: linear-gradient(135deg, #f5b72c, #f0620d);
`;

const Dock = styled.div`
  display: flex;
  align-items: center;
  gap: 6px;
`;

const DockButton = styled.button`
  position: relative;
  display: flex;
  align-items: center;
  justify-content: center;
  width: 38px;
  height: 38px;
  border-radius: 4px;
  ${(p) =>
    p.$on &&
    css`
      background: #fbf5f4;
      box-shadow: 0 0 1px 1px #e9dedb;
    `}
  &::after {
    content: ${(p) => (p.$run ? '""' : "none")};
    position: absolute;
    bottom: 0;
    width: ${(p) => p.$run}px;
    height: 3px;
    border-radius: 2px;
    background: ${(p) => (p.$on ? "#0f6cbd" : "#888")};
  }
`;

const SearchField = styled.label`
  display: flex;
  align-items: center;
  gap: 10px;
  width: 218px;
  height: 31px;
  padding: 0 6px 0 11px;
  border-radius: 16px;
  background: #fbfefd;
  border: 1px solid #d3dedb;
  input {
    flex: 1;
    font-size: 14px;
  }
  input::placeholder {
    color: #555;
  }
`;

const Tray = styled.div`
  display: flex;
  align-items: center;
  justify-content: flex-end;
  padding-right: 11px;
`;

const Clock = styled.time`
  width: 71px;
  margin-left: 8px;
  text-align: right;
  line-height: 16px;
`;

const TrayItem = styled.span`
  display: flex;
  justify-content: center;
  width: ${(p) => p.$w}px;
  font-size: 15px;
`;

const ChromeLogo = () => (
  <svg width="38" height="36" viewBox="0 0 38 36">
    <circle cx="19" cy="18" r="12" fill="#fbc116" />
    <path fill="#e33b2e" d="M8.600 12a12 12 0 0 1 20.800 0H19l-5 9z" />
    <path fill="#229342" d="M8.600 12a12 12 0 0 0 10.400 18l5.200-9-10.400 0z" />
    <circle cx="19" cy="18" r="6" fill="#fff" />
    <circle cx="19" cy="18" r="4.700" fill="#1a73e8" />
    <circle cx="28" cy="9" r="8" fill="#70868f" />
    <text x="28" y="12" textAnchor="middle" fontSize="8" fill="#fff">義</text>
  </svg>
);

const Taskbar = () => (
  <TaskBar>
    <Weather>
      <Sun />
      <div>
        28°C<span>晴れ</span>
      </div>
    </Weather>
    <Dock>
      <DockButton aria-label="スタート">
        <svg width="23" height="23">
          <defs>
            <linearGradient id="win" x1="0" y1="0" x2="1" y2="1">
              <stop offset="0" stopColor="#4cc8f8" />
              <stop offset="1" stopColor="#0068c4" />
            </linearGradient>
          </defs>
          <path fill="url(#win)" d="M0 0h11v11H0zM12 0h11v11H12zM0 12h11v11H0zM12 12h11v11H12z" />
        </svg>
      </DockButton>
      <SearchField>
        <Svg $w={15} viewBox="0 0 20 20">
          {icons.search}
        </Svg>
        <input placeholder="検索" aria-label="検索" />
        <svg width="44" height="24">
          <path fill="#8b7d6c" d="M1 10c0-6 9-7 9-1l-1 6 3 8H2l2-8c-2 0-3-2-3-5z" />
          <path fill="#b5a58f" d="M3 8c1-3 5-3 6 0v5l-3 2z" />
          <path fill="#d9b36c" d="M11 15h4V6l7-5 7 5v9h4v8H11z" />
          <path fill="#b98639" d="M15 6h14l-7-5zM16 15h12v1H16zM11 20h22v1H11z" />
          <path fill="#a06d2c" d="M17 8h1v7h-1zM26 8h1v7h-1z" />
          <path fill="#8a5a22" d="M20 9h4v5h-4z" />
          <path fill="#cf6a3c" d="M34 2h8l-1 3c5 5 1 11-1 13l1 5h-6l1-5c-3-3-6-8-1-13z" />
          <path fill="#e79a6c" d="M35 7c-2 3 0 7 2 9V6z" />
        </svg>
      </SearchField>
      <DockButton aria-label="タスクビュー">
        <svg width="25" height="23">
          <path fill="#222" d="M0 6h18v16H0z" />
          <rect x="6" y="0" width="18" height="16" rx="1" fill="#fafafa" />
          <path fill="#c0c0c0" d="M6 6h12v10H6z" />
        </svg>
      </DockButton>
      <DockButton aria-label="エクスプローラー">
        <svg width="24" height="22">
          <path fill="#e0a500" d="M0 1.500Q0 0 1.500 0H9l2 3v4H0z" />
          <path fill="#fcc93c" d="M0 5h9l2-3h12l1 1v18H0z" />
          <path fill="#0f6fc5" d="M4 21v-4q0-2 2-2h12q2 0 2 2v4z" />
          <path fill="#0a4f94" d="M7 18h10v1H7z" />
        </svg>
      </DockButton>
      <DockButton $run={6} aria-label="Chrome">
        <ChromeLogo />
      </DockButton>
      <DockButton $on $run={16} aria-label="Photoshop">
        <PsMark $size={22}>Ps</PsMark>
      </DockButton>
    </Dock>
    <Tray>
      <TrayItem $w={31}>
        <Svg $w={20} viewBox="0 0 20 20">
          <path {...line} strokeWidth="1.500" d="m5 12.500 5-5 5 5" />
        </Svg>
      </TrayItem>
      <TrayItem $w={31}>あ</TrayItem>
      <TrayItem $w={34}>
        <Svg $w={17} viewBox="0 0 20 20">
          <path {...line} strokeWidth="1.400" d="M1 8c5-5.500 13-5.500 18 0M4 11.500c3.500-4 8.500-4 12 0M7 14.500c2-2 4-2 6 0" />
          <circle cx="10" cy="17" r="1.400" />
        </Svg>
      </TrayItem>
      <TrayItem $w={14}>
        <Svg $w={17} viewBox="0 0 20 20">
          <path {...line} strokeWidth="1.400" d="M1 7.500h3.500L9 3v14l-4.500-4.500H1zM11.500 7c1.500 2 1.500 4 0 6M14 5c3 3 3 7 0 10" />
          <path {...line} strokeWidth="1" opacity=".4" d="M16.500 3c4 4.500 4 9.500 0 14" />
        </Svg>
      </TrayItem>
      <Clock>
        15:01
        <br />
        2024/05/18
      </Clock>
      <TrayItem $w={32}>
        <Svg $w={17} viewBox="0 0 20 20">
          <path {...line} strokeWidth="1.400" d="M2 15.500 4 11V8c0-8 12-8 12 0v3l2 4.500zM8 16c0 3 4 3 4 0" />
        </Svg>
      </TrayItem>
      <TrayItem $w={40}>
        <svg width="24" height="25">
          <defs>
            <linearGradient id="cpA" x1="0" y1="0" x2="0" y2="1">
              <stop offset="0" stopColor="#1b8fe0" />
              <stop offset=".6" stopColor="#3dbb8a" />
              <stop offset="1" stopColor="#e8d030" />
            </linearGradient>
            <linearGradient id="cpB" x1="0" y1="0" x2="0" y2="1">
              <stop offset="0" stopColor="#a45be8" />
              <stop offset="1" stopColor="#ff6a5c" />
            </linearGradient>
          </defs>
          <path fill="url(#cpA)" d="M6 2q1-2 3-2h7l-6 17H4q-5 0-3.500-4z" />
          <path fill="#2450d0" d="M11 0h4q2 0 2.500 2L19 7h-7z" />
          <path fill="url(#cpB)" d="M14 7h6q4 0 3.500 3L21 18H8q3 0 4-4z" />
          <rect x="5" y="16" width="19" height="9" rx="2" fill="#fbc61a" />
          <text x="14.500" y="23.500" textAnchor="middle" fontSize="8" fontWeight="bold" fill="#222">PRE</text>
        </svg>
      </TrayItem>
    </Tray>
  </TaskBar>
);

const menus = [
  { label: "ファイル(F)", w: 59, kana: true },
  { label: "編集(E)", w: 49 },
  { label: "イメージ(I)", w: 57, kana: true },
  { label: "レイヤー(L)", w: 60, kana: true },
  { label: "書式(Y)", w: 50 },
  { label: "選択範囲(S)", w: 74 },
  { label: "フィルター(T)", w: 67, kana: true },
  { label: "表示(V)", w: 51 },
  { label: "プラグイン", w: 55, kana: true },
  { label: "ウィンドウ(W)", w: 73, kana: true },
  { label: "ヘルプ(H)", w: 60, kana: true },
];

export default function App() {
  return (
    <>
      <GlobalStyle />
      <Shell>
        <MenuBar>
          <PsMark $size={16}>Ps</PsMark>
          {menus.map((m) => (
            <MenuItem key={m.label} $w={m.w} $kana={m.kana}>
              {m.label}
            </MenuItem>
          ))}
          <Spacer />
          <WindowButtons>
            {["minimize", "restore", "x"].map((n) => (
              <IconButton key={n} $w={20} aria-label={n}>
                <Icon name={n} w={20} />
              </IconButton>
            ))}
          </WindowButtons>
        </MenuBar>
        <OptionsBar>
          <Section $w={51} $pad={0} $gap={10}>
            <Grip $tall />
            <Icon name="home" w={20} />
          </Section>
          <Section $w={56} $pad={8} $gap={3}>
            <Icon name="type" w={20} />
            <Icon name="chevron" w={20} />
          </Section>
          <Section $w={44} $dim>
            <Icon name="orient" w={20} />
          </Section>
          <Section $pad={6} $gap={12}>
            <Combo w={165} label="フォント" value="源暎ぽっぷる Pw" />
            <Combo w={160} label="スタイル" value=" -" />
          </Section>
          <Section $pad={7}>
            <Icon name="sizes" w={20} />
            <Lead $w={7} />
            <Combo w={89} label="サイズ" value="75 pt" />
            <AntiAlias>
              <sup>a</sup>a
            </AntiAlias>
            <Select w={103} label="アンチエイリアス" value="シャープ" />
          </Section>
          <Section $pad={6} $gap={2}>
            <IconButton $on $h={26} aria-label="左揃え">
              <Icon name="alignLeft" w={20} />
            </IconButton>
            <IconButton aria-label="中央揃え">
              <Icon name="alignCenter" w={20} />
            </IconButton>
            <IconButton aria-label="右揃え">
              <Icon name="alignRight" w={20} />
            </IconButton>
          </Section>
          <Section $pad={5}>
            <ColorButton aria-label="文字色" />
          </Section>
          <Section $w={41} $dim>
            <Icon name="warp" w={20} />
          </Section>
          <Section $w={41}>
            <Icon name="charPanel" w={20} />
          </Section>
          <Spacer />
          <OptionsEnd>
            <Share>共有</Share>
            <IconButton aria-label="検索">
              <Icon name="search" w={18} />
            </IconButton>
            <IconButton aria-label="ヘルプ">
              <Icon name="help" w={20} />
            </IconButton>
            <IconButton $w={26} aria-label="ワークスペース">
              <Icon name="workspace" w={20} />
            </IconButton>
            <IconButton $w={8} aria-label="ワークスペース一覧">
              <Icon name="chevron" w={18} />
            </IconButton>
          </OptionsEnd>
        </OptionsBar>
        <Main>
          <ToolBar />
          <Document />
          <RightDock />
        </Main>
        <Taskbar />
      </Shell>
    </>
  );
}
